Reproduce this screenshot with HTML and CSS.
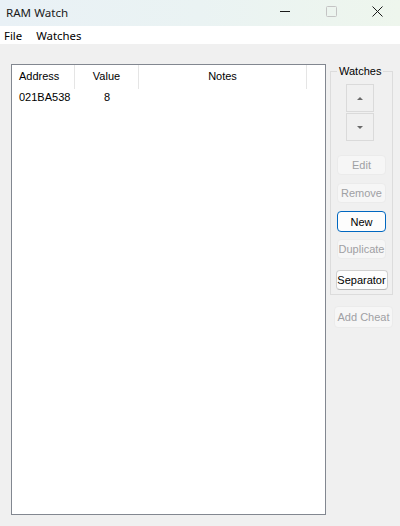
FILE: index.html
```html
<!DOCTYPE html>
<html>
<head>
<meta charset="utf-8">
<link rel="stylesheet" href="styles.css">
</head>
<body>
<div class="window">
  <div class="titlebar">
    <div class="title">RAM Watch</div>
    <div class="caption">
      <div class="cap"><svg width="10" height="10" viewBox="0 0 10 10"><path d="M0 5.5H10" stroke="#1a1a1a" stroke-width="1"/></svg></div>
      <div class="cap"><svg width="11" height="11" viewBox="0 0 11 11"><rect x="0.5" y="0.5" width="10" height="10" rx="1" fill="none" stroke="#c4c4c4" stroke-width="1"/></svg></div>
      <div class="cap"><svg width="11" height="11" viewBox="0 0 11 11"><path d="M0.5 0.5L10.5 10.5M10.5 0.5L0.5 10.5" stroke="#1a1a1a" stroke-width="1"/></svg></div>
    </div>
  </div>
  <div class="menubar">
    <span class="menu-item">File</span>
    <span class="menu-item">Watches</span>
  </div>
  <div class="client">
    <div class="listview">
      <div class="lv-header">
        <div class="col c1 left">Address</div>
        <div class="col c2">Value</div>
        <div class="col c3">Notes</div>
      </div>
      <div class="lv-row">
        <div class="cell c1 left">021BA538</div>
        <div class="cell c2">8</div>
        <div class="cell c3"></div>
      </div>
    </div>
    <div class="sidebar">
      <fieldset class="group">
        <legend class="group-label">Watches</legend>
        <div class="arrows">
          <div class="arrowbtn"><span class="tri up"></span></div>
          <div class="arrowbtn"><span class="tri down"></span></div>
        </div>
        <div class="btn disabled b-edit">Edit</div>
        <div class="btn disabled b-remove">Remove</div>
        <div class="btn default b-new">New</div>
        <div class="btn disabled b-dup">Duplicate</div>
        <div class="btn normal b-sep">Separator</div>
      </fieldset>
      <div class="btn disabled b-cheat">Add Cheat</div>
    </div>
  </div>
</div>
</body>
</html>
```
FILE: styles.css
```css
html, body {
  margin: 0;
  padding: 0;
}
body {
  width: 400px;
  height: 526px;
  overflow: hidden;
  background: #f0f0f0;
  font-family: "Liberation Sans", Arial, sans-serif;
  font-size: 11px;
  color: #000;
}
.window {
  display: flex;
  flex-direction: column;
  height: 526px;
}
.titlebar {
  height: 26px;
  display: flex;
  background: linear-gradient(90deg, #e9f1f6 0%, #eaf3f3 50%, #eef6ed 100%);
}
.title {
  font-family: "Noto Sans", sans-serif;
  font-size: 11.6px;
  line-height: 25px;
  padding-left: 6px;
  color: #1a1a1a;
}
.caption {
  margin-left: auto;
  display: flex;
}
.cap {
  width: 46px;
  height: 22px;
  display: flex;
  align-items: center;
  justify-content: center;
}
.menubar {
  height: 18px;
  background: #fff;
  display: flex;
  gap: 14px;
  padding-left: 4px;
  font-family: "Noto Sans", sans-serif;
  font-size: 11.4px;
  line-height: 19px;
}
.client {
  display: flex;
  padding: 20px 0 0 11px;
}
.listview {
  box-sizing: border-box;
  width: 315px;
  height: 451px;
  border: 1px solid #828790;
  background: #fff;
}
.lv-header, .lv-row {
  display: flex;
}
.col {
  height: 24px;
  line-height: 23px;
  text-align: center;
  box-sizing: border-box;
  border-right: 1px solid #e5e5e5;
}
.cell {
  height: 17px;
  line-height: 17px;
  text-align: center;
  box-sizing: border-box;
}
.c1 { width: 63px; }
.c2 { width: 64px; }
.c3 { width: 168px; }
.left { text-align: left; padding-left: 7px; }
.sidebar {
  margin-left: 4px;
  display: flex;
  flex-direction: column;
  margin-top: 1px;
}
.group {
  box-sizing: border-box;
  width: 63px;
  margin: 0;
  padding: 0 0 4px 0;
  border: 1px solid #dcdcdc;
  display: flex;
  flex-direction: column;
  align-items: center;
}
.group-label {
  margin-left: 6px;
  padding: 0 2px;
  line-height: 13px;
  font-size: 11px;
}
.arrows {
  margin-top: 6px;
  display: flex;
  flex-direction: column;
  gap: 1px;
  margin-right: 3px;
}
.arrowbtn {
  box-sizing: border-box;
  width: 28px;
  height: 28px;
  border: 1px solid #dadada;
  background: #f0f0f0;
  display: flex;
  align-items: center;
  justify-content: center;
}
.tri {
  width: 0;
  height: 0;
  border-left: 3px solid transparent;
  border-right: 3px solid transparent;
}
.tri.up { border-bottom: 3px solid #6a6a6a; }
.tri.down { border-top: 3px solid #6a6a6a; }
.btn {
  box-sizing: border-box;
  width: 49px;
  height: 20px;
  border-radius: 4px;
  display: flex;
  align-items: center;
  justify-content: center;
  white-space: nowrap;
}
.disabled {
  background: #f6f6f6;
  border: 1px solid #ebebeb;
  color: #9fa0a4;
}
.default {
  background: #fdfdfd;
  border: 1px solid #0067c0;
  color: #000;
}
.normal {
  background: #fdfdfd;
  border: 1px solid #d0d0d0;
  border-bottom-color: #b8b8b8;
  color: #000;
}
.b-edit { margin-top: 14px; }
.b-remove { margin-top: 8px; }
.b-new { margin-top: 8px; height: 21px; }
.b-dup { margin-top: 7px; }
.b-sep { margin-top: 11px; width: 52px; }
.b-cheat {
  margin-top: 11px;
  margin-left: 4px;
  width: 59px;
  height: 22px;
}
```
